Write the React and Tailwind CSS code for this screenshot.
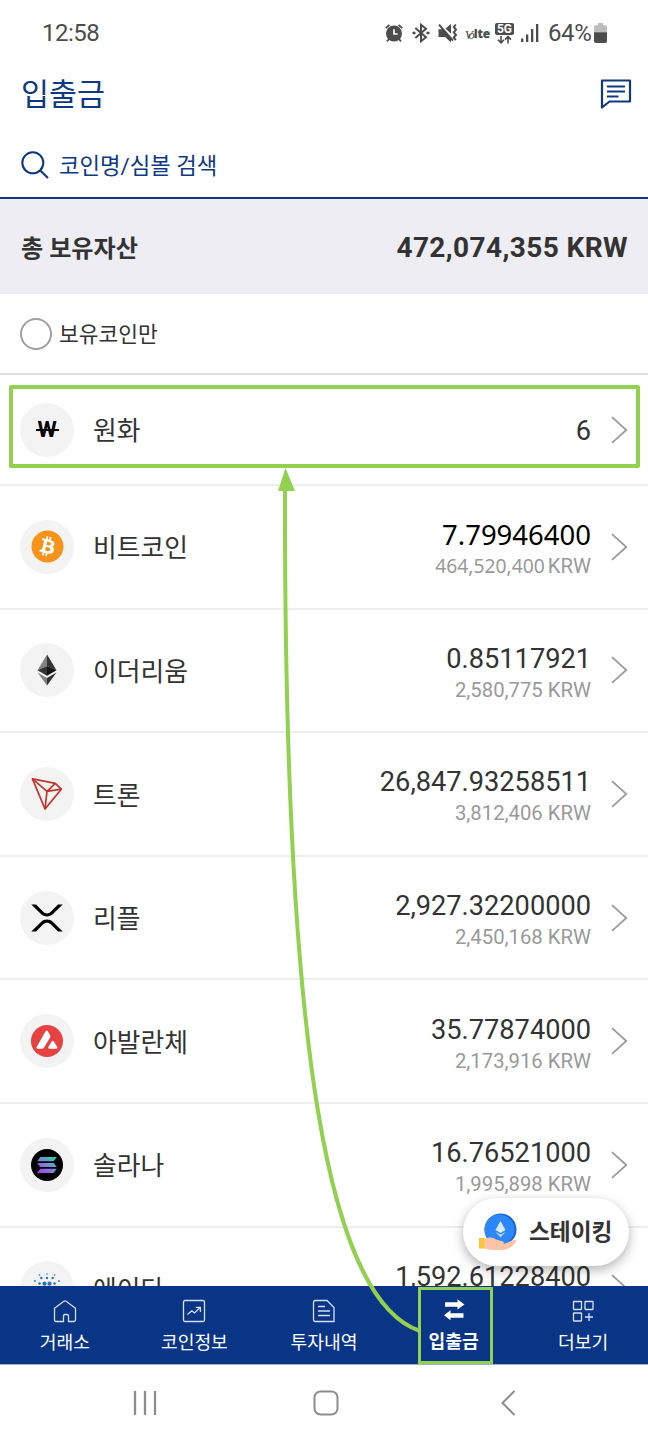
import React from "react";
import { FaBitcoin } from "react-icons/fa";

const SANS = "font-['Roboto','Noto_Sans_CJK_KR',sans-serif]";

const WonIcon = () => (
  <span className="relative flex items-center font-['Roboto'] text-[22px] leading-none font-bold text-black">
    W
    <span className="absolute top-[10px] -left-px h-[2px] w-[23px] bg-black" />
  </span>
);

const EthIcon = () => (
  <svg width="20" height="32" viewBox="0 0 20 32">
    <path d="M10 0.5 0.5 16.2 10 12Z" fill="#828384" />
    <path d="M10 0.5 19.5 16.2 10 12Z" fill="#343434" />
    <path d="M0.5 16.2 10 12v9.8Z" fill="#343434" />
    <path d="M19.5 16.2 10 12v9.8Z" fill="#141414" />
    <path d="M0.5 18.6 10 24V31.5Z" fill="#828384" />
    <path d="M19.5 18.6 10 24V31.5Z" fill="#343434" />
  </svg>
);

const TronIcon = () => (
  <svg width="32" height="34" viewBox="0 0 32 34" fill="none" stroke="#c3352c" strokeWidth="1.7" strokeLinejoin="round">
    <path d="M1.5 1.8 24.3 6.3 30.3 12.2 14 32Z" />
    <path d="M1.5 1.8 16 14.4 24.3 6.3M16 14.4 30.3 12.2M16 14.4 14 32" />
  </svg>
);

const XrpIcon = () => (
  <svg width="32" height="28" viewBox="0 0 32 28" fill="#000">
    <path d="M0.3 0.5H5L12.2 7.8C14.3 9.9 17.700 9.900 19.800 7.800L27 0.500H31.700L22 10.100C18.700 13.300 13.300 13.300 10 10.100Z" />
    <path d="M0.300 27.500H5L12.200 20.200C14.300 18.100 17.700 18.100 19.800 20.200L27 27.500H31.700L22 17.900C18.700 14.700 13.300 14.700 10 17.900Z" />
  </svg>
);

const AvaxIcon = () => (
  <svg width="32" height="32" viewBox="0 0 32 32">
    <circle cx="16" cy="16" r="16" fill="#e84142" />
    <path d="M14.6 6.3c.7-1.2 1.7-1.2 2.3 0l2.2 4c.4.8.4 1.5 0 2.2L13 22.6c-.5.8-1.1 1.2-2 1.2H6.9c-1.3 0-1.8-.8-1.1-2Z" fill="#fff" />
    <path d="M20.7 16.6c.7-1.2 1.5-1.2 2.2 0l3.2 5.2c.7 1.2.2 2-1.1 2h-6.4c-1.3 0-1.8-.8-1.1-2Z" fill="#fff" />
  </svg>
);

const SolIcon = () => (
  <svg width="32" height="32" viewBox="0 0 32 32">
    <defs>
      <linearGradient id="sol" x1="8" y1="25" x2="22" y2="7" gradientUnits="userSpaceOnUse">
        <stop offset="0.05" stopColor="#b13df5" />
        <stop offset="0.5" stopColor="#7c83d6" />
        <stop offset="1" stopColor="#2fd3ad" />
      </linearGradient>
    </defs>
    <circle cx="16" cy="16" r="16" fill="#000" />
    <g fill="url(#sol)">
      <path d="M9.3 8H25.8L22.7 12.2H6.2Z" />
      <path d="M6.2 13.9H22.7L25.8 18.1H9.3Z" />
      <path d="M9.3 19.8H25.8L22.7 24H6.2Z" />
    </g>
  </svg>
);

const AdaIcon = () => (
  <svg width="32" height="32" viewBox="0 0 32 32" fill="#2d6fc4">
    {[
      [16, 2, 0.8], [8.5, 3, 0.8], [23.5, 3, 0.8], [10.3, 6, 1.2], [21.7, 6, 1.2], [16, 6, 1.2],
      [4, 9, 0.9], [28, 9, 0.9], [13.5, 11.7, 2.1], [18.5, 11.7, 2.1], [8.5, 11.5, 1.3], [23.5, 11.5, 1.3],
      [11, 16, 2.1], [21, 16, 2.1], [13.5, 20.3, 2.1], [18.5, 20.3, 2.1], [5, 16, 1.2], [27, 16, 1.2],
    ].map(([x, y, r]) => (
      <circle key={`${x}-${y}`} cx={x} cy={y} r={r} />
    ))}
  </svg>
);

const BtcIcon = () => (
  <span className="flex size-8 items-center justify-center rounded-full bg-[radial-gradient(circle,#fff_60%,transparent_62%)]">
    <FaBitcoin size={33} className="shrink-0 text-[#f7931a]" />
  </span>
);

const coins = [
  { name: "비트코인", amount: "7.79946400", krw: "464,520,400", icon: <BtcIcon />, edited: true },
  { name: "이더리움", amount: "0.85117921", krw: "2,580,775", icon: <EthIcon /> },
  { name: "트론", amount: "26,847.93258511", krw: "3,812,406", icon: <TronIcon /> },
  { name: "리플", amount: "2,927.32200000", krw: "2,450,168", icon: <XrpIcon /> },
  { name: "아발란체", amount: "35.77874000", krw: "2,173,916", icon: <AvaxIcon /> },
  { name: "솔라나", amount: "16.76521000", krw: "1,995,898", icon: <SolIcon /> },
  { name: "에이다", amount: "1,592.61228400", icon: <AdaIcon /> },
];

const Chevron = () => (
  <svg className="ml-5 shrink-0" width="17" height="28" viewBox="0 0 17 28" fill="none" stroke="#999" strokeWidth="1.7">
    <path d="M1 1.2 15.3 14 1 26.8" />
  </svg>
);

const CoinBadge = ({ children }) => (
  <div className="flex size-[54px] shrink-0 items-center justify-center rounded-full bg-[#f3f3f3]">{children}</div>
);

const CoinRow = ({ coin }) => (
  <div className="flex h-[123.6px] shrink-0 items-center border-b-2 border-[#eeeeef] pr-5 pl-5">
    <CoinBadge>{coin.icon}</CoinBadge>
    <span className="ml-[19px] pt-[5px] text-[25.8px] leading-none text-[#333]">{coin.name}</span>
    <div className="ml-auto flex flex-col items-end pt-[5px]">
      <span
        className={
          coin.edited
            ? "font-['Noto_Sans'] text-[27.5px] leading-[34px] text-black"
            : "text-[27.2px] leading-[34px] text-[#333]"
        }
      >
        {coin.amount}
      </span>
      <span className="h-7 text-[20.3px] leading-7 text-[#999]">
        {coin.edited ? (
          <>
            <span className="mr-[3px] font-['Noto_Sans'] text-[19.3px]">{coin.krw}</span>KRW
          </>
        ) : (
          coin.krw && `${coin.krw} KRW`
        )}
      </span>
    </div>
    <Chevron />
  </div>
);

const StatusBar = () => (
  <div className="flex h-[66px] shrink-0 items-center pl-[42px] text-[24px] text-[#4c4c4c]">
    <span className="tracking-[-0.5px]">12:58</span>
    <div className="mr-[41px] ml-auto flex items-center">
      {/* alarm */}
      <svg width="18" height="18" viewBox="0 0 18 18" fill="none" stroke="#4c4c4c" strokeWidth="1.8">
        <circle cx="9" cy="9.5" r="8" fill="#4c4c4c" stroke="none" />
        <path d="M0.8 4.200 4.400 0.900M17.200 4.200 13.600 0.900M4 15 2 17.400M14 15l2 2.400" />
        <path d="M9 5.200V10h3.600" stroke="#fff" strokeWidth="1.700" />
      </svg>
      {/* bluetooth */}
      <svg className="ml-[9px]" width="18" height="20" viewBox="0 0 18 20" fill="none" stroke="#4c4c4c" strokeWidth="2">
        <path d="M3.300 5 14 14.200 9 18.200V1.800L14 5.800 3.300 15" />
        <path d="M0.500 10h3M14.500 10h3" strokeWidth="2.600" />
      </svg>
      {/* mute */}
      <svg className="ml-[8px]" width="20" height="20" viewBox="0 0 20 20" fill="#4c4c4c">
        <path d="M0.500 6.200h4L13 15V19.400L7.200 14H0.500ZM7.500 5.600 13 1V10.800Z" />
        <path d="M1 1.700 15 17.600" stroke="#4c4c4c" strokeWidth="2" />
        <path d="M17.800 1.500 15.800 4 18 6.600 15.800 9.300 18 12l-2.200 2.600 2 2.600" fill="none" stroke="#4c4c4c" strokeWidth="2" />
      </svg>
      <span className="ml-[7px] flex h-5 items-center pt-[2px] leading-none">
        <i className="font-['Liberation_Serif'] text-[13px] tracking-[-3px]">Vo</i>
        <b className="ml-[2px] font-['Open_Sans'] text-[12px] font-extrabold tracking-[-0.2px]">lte</b>
      </span>
      <span className="ml-[5px] flex flex-col items-center">
        <span className="flex h-3 w-[19px] items-center justify-center rounded-[2px] bg-[#4c4c4c] font-['Roboto'] text-[12px] leading-none font-bold text-white">
          5G
        </span>
        <svg width="15" height="9" viewBox="0 0 15 9" fill="none" stroke="#4c4c4c" strokeWidth="1.600">
          <path d="M4 1v6.600M1 4.700 4 7.800 7 4.700M11 8.400V1.600M8 4.600 11 1.500 14 4.600" />
        </svg>
      </span>
      <svg className="ml-[7px]" width="18" height="18" viewBox="0 0 18 18" fill="#4c4c4c">
        <path d="M0 14.500h2.300V18H0ZM5 10.500h2.300V18H5ZM10 5h2.300v13H10ZM15 0h2.300v18H15Z" />
      </svg>
      <span className="ml-[9px] w-[43px] tracking-[-0.400px]">64%</span>
      <svg className="ml-[3px]" width="13" height="20" viewBox="0 0 13 20">
        <path d="M4 0h5v2.200h2.200Q13 2.200 13 4v5.500H0V4Q0 2.200 1.800 2.200H4Z" fill="#bdbdbd" />
        <path d="M0 9.300h13V18q0 2-2 2H2q-2 0-2-2Z" fill="#4c4c4c" />
      </svg>
    </div>
  </div>
);

const navIcon = { width: 24, height: 24, viewBox: "0 0 24 24", fill: "none", stroke: "#d5e0f5", strokeWidth: 1.3 };

const tabs = [
  {
    label: "거래소",
    icon: (
      <svg {...navIcon}>
        <path d="M1.500 9.300 10.900 2.300q1.100-.8 2.200 0l9.400 7V20.800q0 1.700-1.700 1.700h-5.300V17q0-1.500-1.500-1.500h-2q-1.500 0-1.500 1.500v5.500H3.200q-1.700 0-1.700-1.700Z" />
      </svg>
    ),
  },
  {
    label: "코인정보",
    icon: (
      <svg {...navIcon}>
        <rect x="1.500" y="1.500" width="21" height="21" rx="1.500" />
        <path d="M5.500 15.500 9.800 11.800 12.500 14 18.300 8.300M13.800 8.300h4.600v4.600" />
      </svg>
    ),
  },
  {
    label: "투자내역",
    icon: (
      <svg {...navIcon}>
        <path d="M3.500 1.500H15L22 8.500V22.500H3.500Q1.500 22.500 1.500 20.500V3.500Q1.500 1.500 3.500 1.500Z" />
        <path d="M6 7.500h7M6 12h12M6 16.500h12" />
      </svg>
    ),
  },
  {
    label: "입출금",
    active: true,
    icon: (
      <svg width="24" height="24" viewBox="0 0 24 24" fill="#fff">
        <path d="M3 3.200H15.500V0.200L22.500 5.400 15.500 10.600V7.800H3ZM21.500 14.200H8.500V11.200L2 16.200 8.500 21.300V18.700H21.500Z" />
      </svg>
    ),
  },
  {
    label: "더보기",
    icon: (
      <svg {...navIcon}>
        <rect x="2.500" y="2.500" width="8" height="8" rx="0.500" />
        <rect x="14" y="2.500" width="8" height="8" rx="0.500" />
        <rect x="2.500" y="14" width="8" height="8" rx="0.500" />
        <path d="M18 14v8M14 18h8" />
      </svg>
    ),
  },
];

const App = () => {
  return (
    <div className={`relative flex h-[1440px] w-[648px] flex-col overflow-hidden bg-white ${SANS}`}>
      <StatusBar />

      {/* Title */}
      <div className="flex h-[56px] shrink-0 items-center justify-between pr-[16px] pl-[21px] text-[#0f3880]">
        <h1 className="pt-[3px] text-[30.400px] leading-none">입출금</h1>
        <svg width="32" height="30" viewBox="0 0 32 30" fill="none" stroke="#0f3880" strokeWidth="2.200">
          <path d="M2 1.500H30V22.500H9.500L2 28.500Z" strokeLinejoin="round" />
          <path d="M7 7.500H25M7 12.500H25M7 17.500H18.500" />
        </svg>
      </div>

      {/* Search */}
      <div className="flex h-[77px] shrink-0 items-center border-b-2 border-[#0f3880] pt-[10px] pl-[21px] text-[#0f3880]">
        <svg width="28" height="28" viewBox="0 0 28 28" fill="none" stroke="#0f3880" strokeWidth="2.100">
          <circle cx="11.800" cy="11.800" r="10.500" />
          <path d="M19 19.200 27 27" />
        </svg>
        <span className="ml-[10px] pt-[3px] text-[22.300px] leading-none">코인명/심볼 검색</span>
      </div>

      {/* Total */}
      <div className="flex h-[95px] shrink-0 items-center justify-between bg-[#ededf3] pr-5 pl-[21px] font-bold text-[#333]">
        <span className="pt-[5px] text-[24.100px] leading-none">총 보유자산</span>
        <span className="pt-[3px] text-[28px] tracking-[0.400px]">472,074,355 KRW</span>
      </div>

      <div className="flex h-[81px] shrink-0 items-center border-b-2 border-[#dedede] pl-5">
        <span className="size-8 rounded-full border-2 border-[#a0a0a0]" />
        <span className="ml-[7px] pt-[2px] text-[21.500px] leading-none text-[#333]">보유코인만</span>
      </div>

      <div className="flex min-h-0 flex-1 flex-col overflow-hidden">
        <div className="flex h-[111px] shrink-0 items-center border-b-2 border-[#eeeeef] pr-5 pl-5">
          <CoinBadge>
            <WonIcon />
          </CoinBadge>
          <span className="ml-[19px] pt-[4px] text-[25.800px] leading-none text-[#333]">원화</span>
          <span className="ml-auto pt-[3px] text-[27.200px] text-[#333]">6</span>
          <Chevron />
        </div>
        {coins.map((coin) => (
          <CoinRow key={coin.name} coin={coin} />
        ))}
      </div>

      {/* Tab bar */}
      <div className="grid h-[78px] shrink-0 grid-cols-5 bg-[#093587]">
        {tabs.map((tab) => (
          <div key={tab.label} className="flex flex-col items-center pt-[13px] text-white">
            {tab.icon}
            <span className={tab.active ? "mt-[9px] text-[18.200px] leading-5 font-bold" : "mt-[10px] text-[18.200px] leading-5"}>
              {tab.label}
            </span>
          </div>
        ))}
      </div>

      {/* Android navigation */}
      <div className="flex h-[76px] shrink-0 items-center border-t border-[#9fb0d0] bg-white pl-[133px]">
        <svg width="24" height="26" viewBox="0 0 24 26" stroke="#8d8d8d" strokeWidth="2.300">
          <path d="M2 1v24M12 1v24M22 1v24" />
        </svg>
        <svg className="ml-[156px]" width="26" height="26" viewBox="0 0 26 26" fill="none" stroke="#8d8d8d" strokeWidth="2">
          <rect x="1.500" y="1.500" width="23" height="23" rx="6" />
        </svg>
        <svg className="ml-[162px]" width="15" height="26" viewBox="0 0 15 26" fill="none" stroke="#8d8d8d" strokeWidth="2">
          <path d="M13.500 1 1.500 13 13.500 25" />
        </svg>
      </div>

      {/* Staking button */}
      <button className="absolute top-[1198px] left-[463px] flex h-[68px] w-[166px] items-center rounded-full bg-white pl-[15px] shadow-[0_4px_12px_rgba(0,0,0,0.3)]">
        <svg width="40" height="40" viewBox="0 0 40 40">
          <circle cx="22.500" cy="17.500" r="16" fill="#1b62d8" />
          <circle cx="21.500" cy="17.500" r="15" fill="#2e86fb" />
          <path d="M22.500 9 17.500 18 22.500 21 27.500 18Z" fill="#d9ebff" />
          <path d="M17.500 19.800 22.500 25.500 27.500 19.800 22.500 22.600Z" fill="#b9d8ff" />
          <path d="M6 27.500C11 24.500 15 25 18 27.500L25 29.500C26.500 30.500 26 31.500 25 32 29 31 34 28 38 27.800 38.500 31 32 37.500 25 38H14L6 36.500Z" fill="#fcc3a6" />
          <path d="M1 26h5.500v10.500H1Z" fill="#fbc53c" />
        </svg>
        <span className="ml-[11px] pt-[3px] text-[22.700px] leading-none font-bold whitespace-nowrap text-[#333]">스테이킹</span>
      </button>

      {/* Guide annotations */}
      <div className="absolute top-[385px] left-[9px] h-[83px] w-[631px] rounded-[2px] border-4 border-[#92d050]" />
      <div className="absolute top-[1287px] left-[418px] h-[77px] w-[75px] border-3 border-[#92d050]" />
      <svg className="pointer-events-none absolute top-0 left-0" width="648" height="1440" viewBox="0 0 648 1440" fill="none">
        <path d="M420 1331C328 1300 284 1050 285 490" stroke="#92d050" strokeWidth="4" />
        <path d="M285.500 468 295 491H278Z" fill="#92d050" />
      </svg>
    </div>
  );
};

export default App;
